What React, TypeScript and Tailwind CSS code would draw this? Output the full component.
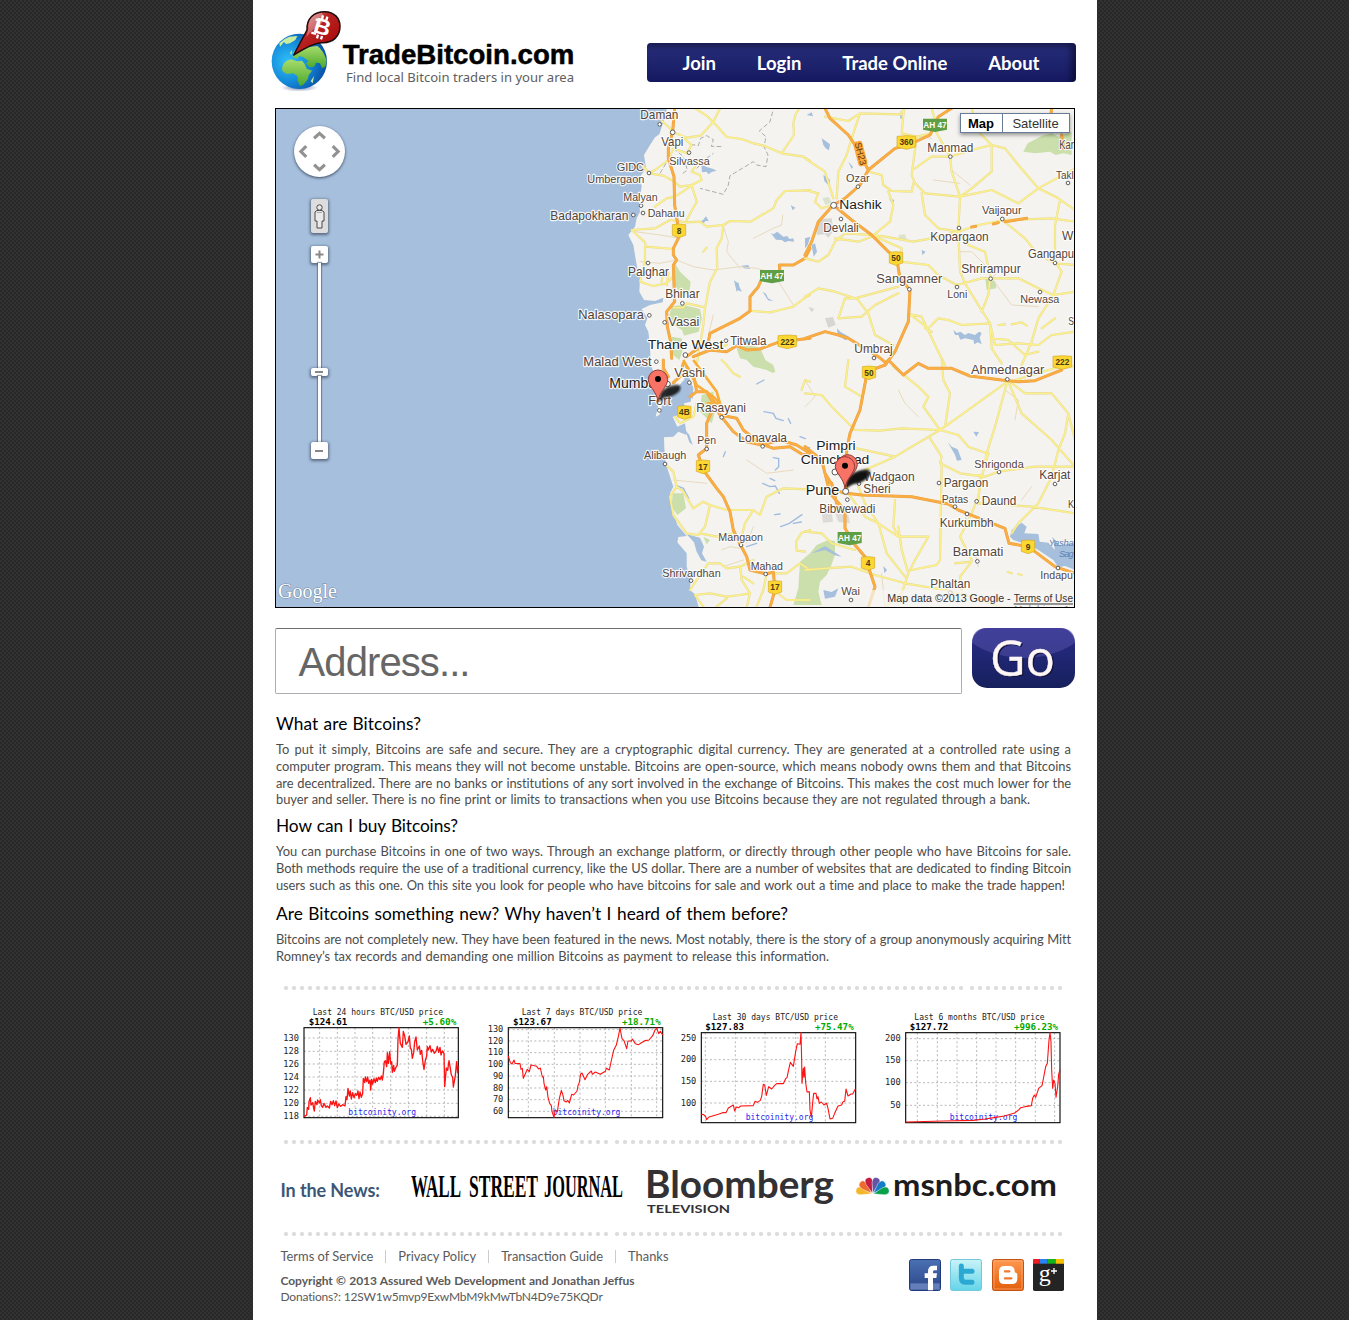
import React from "react";

type Label = [string, number, number, number, number];

/* text, x, baseline, width, font size */
const labelsNW: Label[] = [
  ["Daman", 301, 41, 114, 36], ["Vapi", 364, 122, 66, 36], ["Silvassa", 388, 180, 121, 34],
  ["GIDC", 230, 197, 82, 34], ["Umbergaon", 142, 233, 171, 34], ["Malyan", 250, 289, 103, 34],
  ["Badapokharan", 31, 345, 234, 36], ["Dahanu", 323, 335, 111, 34], ["Palghar", 264, 512, 123, 36],
  ["Bhinar", 376, 578, 103, 36], ["Nalasopara", 115, 642, 197, 38], ["Vasai", 385, 663, 93, 38],
  ["Titwala", 571, 720, 108, 36],
];
const bigNW: Label[] = [["Thane West", 323, 732, 227, 41]];
const labelsNE: Label[] = [
  ["Manmad", 367, 140, 138, 36], ["Ozar", 123, 232, 71, 34], ["Devlali", 55, 382, 106, 36],
  ["Vaijapur", 531, 328, 119, 34], ["Kopargaon", 376, 407, 175, 36], ["Shrirampur", 469, 503, 178, 36],
  ["Sangamner", 214, 535, 198, 39], ["Loni", 427, 580, 60, 34], ["Newasa", 646, 594, 117, 34],
  ["Umbraj", 148, 743, 115, 36], ["Gangapu", 669, 458, 138, 36], ["Kar", 763, 132, 44, 36],
  ["Takl", 753, 221, 53, 35], ["W", 771, 404, 34, 37], ["S", 790, 661, 17, 32],
];
const bigNE: Label[] = [["Nashik", 103, 313, 127, 41]];
const labelsSW: Label[] = [
  ["Malad West", 130, 18, 205, 37], ["Vashi", 403, 52, 92, 37], ["Fort", 325, 136, 68, 39],
  ["Rasayani", 469, 155, 149, 36], ["Lonavala", 595, 245, 146, 36], ["Pen", 472, 252, 56, 35],
  ["Alibaugh", 312, 298, 127, 34], ["Mangaon", 535, 542, 134, 35], ["Mahad", 632, 629, 97, 35],
  ["Shrivardhan", 367, 650, 175, 34],
];
const bigSW: Label[] = [["Mumbai", 208, 84, 150, 43]];
const labelsSE: Label[] = [
  ["Ahmednagar", 498, 43, 220, 39], ["Wadgaon", 176, 362, 153, 37], ["Sheri", 175, 400, 82, 36],
  ["Bibwewadi", 43, 458, 168, 36], ["Shrigonda", 508, 323, 148, 34], ["Pargaon", 416, 380, 134, 37],
  ["Karjat", 703, 357, 93, 36], ["Patas", 410, 428, 80, 34], ["Daund", 530, 435, 104, 37],
  ["Kurkumbh", 404, 500, 162, 36], ["Baramati", 443, 587, 152, 39], ["Phaltan", 376, 683, 120, 36],
  ["Indapu", 706, 658, 98, 34], ["Wai", 109, 706, 56, 34], ["K", 789, 443, 18, 32],
];
const bigSE: Label[] = [["Pimpri", 34, 269, 118, 41], ["Chinchwad", -13, 312, 206, 40], ["Pune", 2, 404, 101, 43]];

function Labels({ items, dark = false }: { items: Label[]; dark?: boolean }) {
  return (
    <g fill={dark ? "#1c1c1c" : "#54463d"} stroke="#ffffff" strokeOpacity={0.85} strokeWidth={7} strokeLinejoin="round" style={{ paintOrder: "stroke" }} fontFamily="Liberation Sans, sans-serif">
      {items.map(([t, x, y, w, s]) => (
        <text key={t} x={x} y={y} fontSize={s} textLength={w} lengthAdjust="spacingAndGlyphs">{t}</text>
      ))}
    </g>
  );
}

function Dots({ at, r = 5.5 }: { at: number[][]; r?: number }) {
  return (
    <g fill="#fff" stroke="#5b5b5b" strokeWidth={3}>
      {at.map(([x, y]) => <circle key={x + "-" + y} cx={x} cy={y} r={r} />)}
    </g>
  );
}

function Shield({ x, y, t, w = 40 }: { x: number; y: number; t: string; w?: number }) {
  const h = w / 2;
  return (
    <g transform={`translate(${x} ${y})`}>
      <path d={`M${-h} -18Q0 -22 ${h} -18V14L0 21L${-h} 14Z`} fill="#fcd733" stroke="#d3a91f" strokeWidth={2} />
      <text y={9} textAnchor="middle" fontFamily="Liberation Sans, sans-serif" fontWeight={700} fontSize={25} fill="#4a3c12">{t}</text>
    </g>
  );
}

function GreenShield({ x, y }: { x: number; y: number }) {
  return (
    <g transform={`translate(${x} ${y})`}>
      <path d="M-36 -19H36V14L0 21L-36 14Z" fill="#5f9e45" />
      <text y={9} textAnchor="middle" textLength={70} lengthAdjust="spacingAndGlyphs" fontFamily="Liberation Sans, sans-serif" fontWeight={700} fontSize={25} fill="#fff">AH 47</text>
    </g>
  );
}

function Roads({ yellow, orange, thin = "" }: { yellow: string; orange: string; thin?: string }) {
  return (
    <g fill="none" strokeLinejoin="round" strokeLinecap="round">
      <path d={thin} stroke="#e9d9bd" strokeWidth={3} />
      <path d={yellow} stroke="#e5d88f" strokeWidth={6.5} />
      <path d={yellow} stroke="#fcf08b" strokeWidth={4.2} />
      <path d={orange} stroke="#e5a045" strokeWidth={9} />
      <path d={orange} stroke="#fbad42" strokeWidth={6.5} />
    </g>
  );
}

function Pin({ x, y }: { x: number; y: number }) {
  return (
    <g transform={`translate(${x} ${y})`}>
      <path d="M0 0L8 -28Q24 -50 60 -52Q74 -46 62 -30Q44 -14 22 -14Z" fill="#111" opacity={0.88} filter="url(#soft)" />
      <path d="M0 0C-3 -32 -28 -44 -29 -67A29 29 0 0 1 29 -67C28 -44 3 -32 0 0Z" fill="#f87366" stroke="#8e3a33" strokeWidth={3} />
      <circle cy={-69} r={9} fill="#000" />
    </g>
  );
}

const NW = "translate(540 105) scale(.33333)";
const NE = "translate(805 105) scale(.33333)";
const SW = "translate(540 360) scale(.33333)";
const SE = "translate(805 360) scale(.33333)";

function MapCanvas() {
  return (
    <svg className="block h-full w-full" viewBox="276 109 798 498">
      <defs><filter id="soft" x="-30%" y="-30%" width="160%" height="160%"><feGaussianBlur stdDeviation="3" /></filter></defs>
      <rect x={276} y={109} width={798} height={498} fill="#a5bfdd" />
      <g transform={NW}>
        <path fill="#f4f3f0" d="M383 0L375 35L358 88L345 97L330 120L312 150L318 190L300 215L305 245L297 290L300 320L290 340L285 365L265 390L280 420L290 480L300 520L298 560L312 585L345 588L370 578L368 592L330 600L305 612L322 640L315 660L325 680L330 720L332 780L345 810L350 850L345 880L355 900L347 935L358 930L370 890L385 855L410 850L432 825L440 830L455 870L452 890L432 895L440 925L398 935L412 965L435 955L440 990L415 980L400 995L372 997L373 1030L377 1075L400 1145L390 1165L400 1225L412 1260L440 1293L415 1296L412 1312L440 1345L440 1385L452 1420L450 1455L465 1468L480 1520H1620V0Z" />
        <path fill="#a5bfdd" d="M440 1288L480 1298L492 1325L486 1345L500 1370L484 1366L470 1340L462 1312ZM432 820L446 812L460 850L458 882L446 870ZM436 975L448 990L458 1020L448 1012ZM484 178L500 186L520 192L530 198L516 200L505 208L500 200L486 202ZM692 384L700 388L712 380L730 395L742 393L748 402L760 400L762 410L745 408L735 412L725 405L708 404ZM582 526L590 532L596 534L598 545L606 560L594 556L590 560ZM668 560L678 566L684 580L700 588L684 586ZM480 350L490 344L498 334L506 348L496 348L490 356ZM626 765L640 758L650 752L664 764L684 772L670 775L650 778ZM604 482L625 480L630 492L612 490ZM752 300L766 308L758 316Z" />
        <g fill="#cbdfac">
          <path d="M405 475L420 500L452 530L448 565L425 572L405 540ZM395 604L430 600L480 612L486 640L476 680L432 692L426 675L400 660L388 630ZM590 730L625 720L660 728L676 765L700 780L706 800L698 804L680 795L640 785L620 765L600 760Z" />
          <path d="M395 695L425 700L430 730L418 765L396 748ZM485 870L520 860L525 920L515 955L480 920ZM398 1165L430 1165L438 1210L412 1230L395 1205ZM490 1295L510 1305L500 1318ZM780 1370L810 1345L830 1320L865 1305L885 1308V1350L872 1385L860 1410L840 1430L835 1460L845 1500H760L775 1450Z" />
        </g>
        <path d="M698 20L690 50L658 78L678 95L672 125L684 150L678 185L650 180L640 170L570 212L565 240L550 268L480 250M452 118L475 122L482 100L500 92L520 104L514 124L550 125M470 190L500 160L520 145M400 130L430 155L442 195L425 208M360 205L375 180L382 165" fill="none" stroke="#9e9e9e" strokeWidth={2.5} strokeDasharray="14 7" />
      </g>
      <g transform={NE} fill="#a5bfdd">
        <path d="M50 100L62 108L75 118L72 136L62 130L55 120ZM5 30L20 22L24 34ZM55 210L66 216L75 225L72 242L58 228ZM130 170L144 186L140 192ZM0 400L16 395L8 420L0 430ZM445 675L456 684L466 680L480 690L490 684L510 690L522 680L530 684L524 698L530 718L518 712L508 718L505 705L480 700L466 704L460 690L450 690ZM96 670L106 680L132 695L122 706L98 690ZM350 435L362 440L352 450ZM20 420L30 415L36 440L26 455ZM252 280L268 285L262 298ZM285 15L292 40L286 42Z" />
        <path d="M655 140L668 115L712 92L740 85L760 95L800 80V150L775 145L752 150L735 140L690 145L655 140M540 515L572 530L574 550L545 555Z" fill="#cbdfac" />
        <path d="M36 350L50 342L80 340L82 355L90 370L70 398L60 388L35 390ZM60 640L84 636L92 660L70 668ZM10 605L28 612L20 622Z" fill="#d8d6d3" />
        <path d="M280 390L300 388L304 402L284 404ZM52 280L70 275L80 292L62 300Z" fill="#dbe3cd" />
      </g>
      <g transform={SE} fill="#a5bfdd">
        <path d="M620 510L650 488L665 500L658 520L700 522L704 545L730 548L750 570L742 530L752 542L760 555L810 550V630L780 618L760 622L745 600L700 570L660 548L640 545L625 540L615 530ZM428 246L440 260L458 268L470 300L456 302L450 284ZM505 215L522 216L514 230ZM20 580L60 558L110 590L90 586L60 570ZM55 690L80 696L100 685L90 710L60 716ZM0 258L16 262L12 275ZM480 470L488 480L482 484ZM235 618L246 630L238 640Z" />
        <path d="M90 460L130 465L135 490L100 486ZM50 460L80 455L84 485L54 488Z" fill="#dddbd8" />
      </g>
      <g transform={SW} fill="none" stroke="#9fbce0" strokeWidth={4} strokeLinecap="round">
        <path d="M668 370L690 380L706 378L718 400M700 293L716 296L716 320L706 330M722 500L748 490L786 464M704 464L720 462M745 176L752 190M672 155L700 160L708 175L730 182M672 60L650 72M620 560L650 550M406 375L430 385L446 415M760 490L784 486M780 230L796 236M690 355L704 362M556 275L550 290" />
      </g>

      <g transform={NW}>
        <Roads
          thin="M285 380L360 390L420 400M300 470L360 475L410 465L460 485L520 495M550 365L565 410L560 440L600 490M640 400L700 370L725 360L728 330M520 495L600 485L650 490L700 505L760 600M520 630L505 690"
          yellow="M365 48L385 65L400 82L440 98L482 92L520 50L540 10M465 10L500 32L530 62L560 96L605 102L640 115L672 122L725 145L790 155L810 168M778 10L766 30L760 55L762 90L725 145M326 205L345 195L385 165L400 130L440 145L455 120L420 90M326 205L370 212L400 228L420 245L455 240L485 225L480 210L455 200L465 185M345 305L380 280L405 275L455 242L470 290L440 345M275 375L345 370L390 345L440 352L480 350L500 365L550 360L570 348L632 350L700 310L710 285L735 258L810 256M275 375L315 412L318 425L400 432M315 425L315 470L300 530L340 543L380 535L398 515M550 360L545 400L530 430L532 490L510 530L495 610L490 660L480 720L470 780M400 608L430 608L440 595L495 607M305 180L320 195L326 205M370 500L365 530M385 505L380 540M635 618L690 622L720 615L760 605L800 575L810 570M495 730L520 738L560 720M490 440L500 428"
          orange="M404 10L398 80L385 130L385 160L402 215L404 300L412 350L415 400L400 430L400 450L410 465L400 480L404 590L380 620L382 665L392 710L395 760M810 430L795 460L760 480L718 480L720 505L670 510L655 545L630 575L630 618L600 640L550 665L510 685L505 710L460 740L440 755M460 755L510 735L560 740L590 722L620 735L660 732L720 710L810 700"
        />
      </g>
      <g transform={NE}>
        <Roads
          thin="M300 90L380 100M385 225L465 235M440 195L495 240M465 440L500 440L540 480M600 480L560 520L620 600L700 605"
          yellow="M60 35L130 48L165 25L285 28L300 10M165 25L140 100L125 150L100 200L95 280M380 10L390 45L380 85L335 95L290 85L296 20M335 95L320 210L330 235L360 265L465 275L560 255L640 295L700 250L810 190M560 120L600 130L640 180L700 250L760 280L810 315M435 155L440 200L465 275L460 380L465 500L480 535L520 600L555 655M330 190L380 155L435 155L500 135L560 120L520 80L500 10M560 120L560 200L500 250L465 275M435 155L390 75M120 385L200 390L240 395L325 410L380 400L460 380L520 360L600 345L740 340L810 350M592 345L660 400L700 450L750 475L810 480M190 200L230 210L235 240L260 258L320 260L325 235M0 160L60 200L85 280M85 300L50 310L30 290L40 265L0 255M250 260L265 300L255 350L200 395L160 410L90 400M200 390L290 430L285 470L370 480L400 510L455 540L530 520L640 520L700 550L745 570L810 560M350 265L360 330L400 370L460 380M280 545L150 580L90 560L40 550L0 575M315 628L350 635L400 740L420 780M315 628L370 670L400 640L430 645L470 660L555 655M555 655L570 720L640 715L700 720L740 690L810 680M555 655L560 730L590 775M745 570L700 640L680 710L650 780M765 285L750 360L750 470L770 500L745 570M555 520L550 570L530 620M620 658L650 652L665 662M120 385L90 410L70 450L40 470L0 460M155 580L190 625L210 690L265 720M155 580L120 580L100 640L170 635L210 600L280 565M560 700L610 705L660 750L700 740M460 380L490 420L540 440L557 520M360 670L380 680M580 660L600 658M710 670L750 640"
          orange="M60 10L75 40L130 90L150 120L190 195M440 10L400 35L375 90L310 120L270 130L190 195L165 240L120 280L85 300L40 350L20 410L0 450M85 300L140 345L200 390L250 440L275 460L285 520L315 555L310 650L270 740L240 780M0 700L60 680L100 690L130 700L220 755L245 775M600 350L665 340M565 357L580 353M500 366L512 364M740 10L738 25M770 90L775 130" />
      </g>
      <g transform={SW}>
        <Roads
          thin="M500 370L400 360M545 570L570 560L600 565M620 550L640 500M620 300L680 340L760 330M550 620L610 600"
          yellow="M375 312L400 335L410 380L430 395L460 445L490 425L510 435L560 450L640 450L660 465L680 410L730 385L810 388M410 380L390 410L400 465L440 520L475 525L495 500L510 435M480 520L530 530L580 520M505 610L480 645L450 690M505 610L540 610L560 625L600 620L640 600M600 620L605 660L630 700L600 705L560 710L510 700L465 705L490 740M630 700L620 742M680 640L670 690L650 740M700 690L740 720L810 720M680 640L740 640L780 610L810 630M640 450L615 490L600 550M795 575L770 572L768 545L785 518L810 510M405 170L420 190L460 170L470 130M600 50L580 40L560 15L545 0M785 90L795 60L810 65M530 740L560 715M640 670L610 650"
          orange="M370 0L370 25L385 50M400 68L420 50L430 10M440 20L462 50L470 95L450 110M470 95L500 95L540 165L580 215L620 245L665 255L720 240L770 255L810 280M500 95L525 130L500 190L500 265L475 285L490 330L530 385L550 410L570 455L580 510L600 552L620 590L630 630L680 642L700 635L705 690L690 742M540 165L590 175L610 210L660 250L700 265L750 260L790 285L810 280" />
        <path d="M430 0L470 75L520 110L540 130L530 95L460 0M500 130L540 130" fill="none" stroke="#f9ae39" strokeWidth={8} />
      </g>
      <g transform={SE}>
        <Roads
          thin="M0 60L30 110L0 140M600 90L640 120L630 180M510 580L520 620M230 640L240 742M650 420L680 380M280 90L300 130L340 170"
          yellow="M0 100L50 105L80 140L150 210L225 212L290 205L400 210L420 200L600 70L780 15L810 20M130 0L120 80L170 110M265 20L340 80L370 110L355 140L405 210L270 290L180 330M410 0L415 60L435 100L420 200M608 60L570 200L545 280L520 410L500 460L465 530L500 600M608 60L650 160L740 240L810 320M608 60L660 100L740 100L790 160L780 220L760 270L740 350L700 430L640 490L620 520M405 210L460 225L490 260L545 280M375 235L410 290L405 310L465 340L540 350L580 335L690 320L810 320M410 310L405 600L395 615L320 630M155 265L270 290M490 345L525 345L520 430L560 432L680 440L810 460M130 400L180 470L220 490L280 530L370 530L330 600L310 640L300 670L210 645L140 620L60 625L0 630M280 500L290 570L310 640L290 700L240 742M270 420L265 500L280 530M220 490L245 580L300 650M0 515L50 520L80 550L150 570M300 670L420 690L500 710L590 742M450 610L500 605L465 650L470 690M608 636L620 640M640 642L650 645M160 380L180 430L220 490M790 160L810 240M550 280L530 350"
          orange="M250 0L240 15L200 30L185 45L165 150L135 220L125 270L125 400L170 405L320 410L430 432L460 450L510 470L600 505L612 550L670 560L750 620L810 640M250 0L295 45L340 10L370 25L440 25L495 48L590 60L640 65L690 62L720 50L770 30M0 260L50 300L60 340L90 390L120 400M80 370L95 430L120 460L120 505L150 555L180 590L190 620L210 680L190 742M60 340L75 400L110 440" />
      </g>

      <g transform={NW}>
        <Dots at={[[359, 58], [447, 143], [327, 204], [303, 302], [280, 330], [309, 324], [324, 474], [427, 595], [328, 631], [374, 652], [558, 707], [349, 770]]} />
        <Dots at={[[398, 82], [436, 750]]} r={7} />
        <Shield x={417} y={377} t="8" /><Shield x={742} y={710} t="222" w={56} /><GreenShield x={696} y={514} />
        <Labels items={labelsNW} /><Labels items={bigNW} dark />
      </g>
      <g transform={NE}>
        <Dots at={[[436, 155], [159, 245], [108, 342], [592, 342], [462, 369], [313, 553], [456, 546], [557, 521], [705, 561], [207, 759], [750, 474], [789, 234]]} />
        <Dots at={[[86, 301]]} r={9} />
        <g transform="translate(166 146) rotate(75)">
          <rect x={-38} y={-14} width={76} height={28} rx={9} fill="#fba73b" />
          <text y={9} textAnchor="middle" fontSize={28} textLength={70} lengthAdjust="spacingAndGlyphs" fontFamily="Liberation Sans, sans-serif" fill="#603d12">SH23</text>
        </g>
        <Shield x={304} y={112} t="360" w={56} /><Shield x={273} y={460} t="50" /><Shield x={772} y={772} t="222" w={56} /><GreenShield x={390} y={60} />
        <Labels items={labelsNE} /><Labels items={bigNE} dark />
      </g>
      <g transform={SW}>
        <Dots at={[[448, 68], [358, 151], [545, 172], [668, 259], [500, 267], [375, 312], [603, 555], [677, 642], [453, 662]]} />
        <Dots at={[[383, 72]]} r={8} />
        <Shield x={433} y={157} t="4B" /><Shield x={489} y={320} t="17" /><Shield x={705} y={682} t="17" />
        <Labels items={labelsSW} /><Labels items={bigSW} dark />
        <Pin x={354} y={126} />
      </g>
      <g transform={SE}>
        <Dots at={[[607, 58], [162, 371], [127, 419], [582, 336], [402, 369], [750, 372], [450, 440], [515, 424], [486, 462], [517, 604], [759, 624], [436, 698], [138, 720]]} />
        <Dots at={[[90, 336], [122, 394]]} r={9} />
        <Shield x={192} y={38} t="50" /><Shield x={189} y={610} t="4" /><Shield x={669} y={560} t="9" /><GreenShield x={134} y={535} />
        <Labels items={labelsSE} /><Labels items={bigSE} dark />
        <g fontFamily="Liberation Sans, sans-serif" fontStyle="italic" fontSize={28} fill="#5f83b4">
          <text x={731} y={558} textLength={75}>Yasha</text><text x={762} y={592} textLength={44}>Sag</text>
        </g>
        <Pin x={128} y={380} /><Pin x={120} y={386} />
        <rect x={185} y={690} width={625} height={52} fill="#f6f5f3" opacity={0.72} />
        <g fontFamily="Liberation Sans, sans-serif" fill="#333" fontSize={31}>
          <text x={247} y={727} textLength={370} lengthAdjust="spacingAndGlyphs">Map data ©2013 Google -</text>
          <text x={626} y={727} textLength={178} lengthAdjust="spacingAndGlyphs">Terms of Use</text>
        </g>
        <path d="M626 732H804" stroke="#333" strokeWidth={3} />
        <text x={628} y={757} fontSize={29} textLength={165} fill="#888" fontFamily="Liberation Sans, sans-serif">Malshiras 1</text>
      </g>
      <text x={278} y={598} fontFamily="Liberation Serif, serif" fontSize={21} textLength={59} lengthAdjust="spacingAndGlyphs" fill="#fff" stroke="#7b8ba2" strokeWidth={1.1} style={{ paintOrder: "stroke" }}>Google</text>
    </svg>
  );
}

function MapControls() {
  const btn = "flex h-[17px] w-[17px] items-center justify-center rounded-[2px] bg-white shadow-[0_1px_3px_1px_rgba(40,50,70,0.6)]";
  return (
    <div className="absolute left-[17.500px] top-[17px] flex w-[52px] flex-col items-center">
      <svg className="h-[51px] w-[51px] rounded-full bg-white shadow-[0_1px_3px_rgba(30,40,60,0.8)]" viewBox="0 0 52 52" fill="none" stroke="#929292" strokeWidth={3.2}>
        <path d="M20.500 12.500L26 7.500L31.500 12.500M20.500 39.500L26 44.500L31.500 39.500M12.500 20.500L7 26L12.500 31.500M39.500 20.500L45 26L39.500 31.500" />
      </svg>
      <div className="mt-[22px] flex h-[34px] w-[17px] items-center justify-center rounded-[2px] bg-[#dddddd] shadow-[0_1px_3px_1px_rgba(40,50,70,0.6)]">
        <svg width="11" height="25" viewBox="0 0 11 25" fill="#e9e9e9" stroke="#4b4b4b">
          <path d="M3 6.500L1 8V17H3V24H8V17H10V8L8 6.500Z" /><circle cx="5.500" cy="3.500" r="2.700" />
          <path d="M3 8.500H8" stroke="#aaa" />
        </svg>
      </div>
      <div className={btn + " mt-[13px]"}>
        <svg width="9" height="9" viewBox="0 0 9 9" stroke="#888" strokeWidth="2"><path d="M0.500 4.500H8.500M4.500 0.500V8.500" /></svg>
      </div>
      <div className="h-[105px] w-[3px] bg-white shadow-[0_0_1px_1px_rgba(80,95,120,0.6)]" />
      <div className="flex h-[8px] w-[17px] items-center justify-center rounded-[2px] bg-white shadow-[0_1px_3px_1px_rgba(40,50,70,0.6)]"><span className="h-[2px] w-2 bg-[#888]" /></div>
      <div className="h-[66px] w-[3px] bg-white shadow-[0_0_1px_1px_rgba(80,95,120,0.6)]" />
      <div className={btn}><span className="h-[2px] w-2 bg-[#888]" /></div>
    </div>
  );
}

function Logo() {
  return (
    <svg className="h-[90px] w-[312px]" viewBox="84 15 936 270">
      <defs>
        <radialGradient id="sea" cx="30%" cy="50%" r="75%"><stop offset="0" stopColor="#2fc0fa" /><stop offset=".5" stopColor="#1489d8" /><stop offset="1" stopColor="#07469c" /></radialGradient>
        <linearGradient id="land" x1="0" y1="0" x2="0" y2="1"><stop offset="0" stopColor="#a9dc6c" /><stop offset="1" stopColor="#4aa82c" /></linearGradient>
        <linearGradient id="red" x1="0" y1="0" x2="1" y2="1"><stop offset="0" stopColor="#e8b0b0" /><stop offset=".4" stopColor="#b92424" /><stop offset="1" stopColor="#a50000" /></linearGradient>
        <radialGradient id="shade"><stop offset="0" stopColor="#51649b" stopOpacity=".8" /><stop offset="1" stopColor="#51649b" stopOpacity="0" /></radialGradient>
      </defs>
      <ellipse cx="178" cy="263" rx="56" ry="12" fill="url(#shade)" />
      <circle cx="178" cy="184" r="83" fill="url(#sea)" />
      <g fill="url(#land)">
        <path d="M126 206Q128 184 153 178L172 184L186 182L194 192L200 206L216 212L206 226L203 238L190 254L180 258L174 244L172 228L160 220L140 222L128 214Z" />
        <path d="M158 172L160 156L180 144L232 138Q250 150 260 182L256 200L246 204L240 190L228 188L222 200L208 202L198 190L206 184L190 172L178 168L172 176Z" />
        <path d="M118 130Q130 116 148 110L172 108L166 120L150 130L138 132L132 126L120 140ZM212 244L222 228L218 250ZM150 158L156 150L154 166Z" fill="#c8eda0" />
      </g>
      <path d="M161 165L201 90C199 55 222 35 254 35C284 35 300 56 300 79C300 110 278 128 250 128Q222 126 161 165Z" fill="url(#red)" stroke="#1e0b0b" strokeWidth="4.500" strokeLinejoin="round" />
      <path d="M205 86C203 57 223 40 246 39Q262 60 234 79Q215 90 199 112Z" fill="#fff" opacity=".32" />
      <text x="222" y="104" transform="rotate(17 248 82)" fontFamily="Liberation Sans, sans-serif" fontWeight="700" fontSize="66" fill="#fff" textLength="50" lengthAdjust="spacingAndGlyphs">B</text>
      <path d="M246 57L249 46M259 61L262 50M231 115L234 104M243 118L246 108M227 58L240 62M214 98L228 102" stroke="#fff" strokeWidth="7" />
      <text x="308" y="191" fontFamily="Liberation Sans, sans-serif" fontWeight="700" fontSize="84" textLength="695" lengthAdjust="spacingAndGlyphs" stroke="#000" strokeWidth="1.500" strokeLinejoin="round">TradeBitcoin.com</text>
      <text x="318" y="247" fontFamily="Noto Sans, sans-serif" fontSize="40" fill="#5e5e5e" textLength="684" lengthAdjust="spacingAndGlyphs">Find local Bitcoin traders in your area</text>
    </svg>
  );
}

function Dotted() {
  const d = "h-2 bg-[radial-gradient(circle,#dddddd_1.8px,transparent_2.4px)] bg-[length:8px_8px]";
  return (
    <div className="flex gap-[3px] pl-[7px]">
      <div className={d + " w-[328px]"} /><div className={d + " w-[352px]"} /><div className={d + " w-[96px]"} />
    </div>
  );
}

type ChartData = {
  view: string; title: string; tx: number; tw: number; ty: number; price: string; px: number; change: string; cw: number;
  box: [number, number, number, number]; ticks: [string, number][]; cols: number[]; line: string; site: number; sw?: number;
};

const charts: ChartData[] = [
  {
    view: "15 0 600 390", title: "Last 24 hours BTC/USD price", tx: 128, tw: 391, ty: 45, price: "$124.61", px: 116, change: "+5.60%", cw: 101,
    box: [102, 83, 463, 270], site: 235, sw: 4,
    ticks: [["130", 114], ["128", 154], ["126", 192], ["124", 231], ["122", 270], ["120", 310], ["118", 349]],
    cols: [149, 202, 255, 308, 362, 415, 470, 523],
    line: "M102 350L110 345L112 322L116 328L117 305L121 293L123 315L128 308L131 325L133 333L136 304L141 314L143 300L148 309L151 299L154 317L158 322L162 310L168 322L172 318L178 324L182 304L186 314L190 302L194 317L198 303L202 323L206 312L212 319L218 314L225 318L228 290L231 299L234 265L238 288L241 273L244 297L248 278L252 293L256 281L260 286L264 273L267 296L270 276L274 292L278 280L280 235L284 248L286 231L290 245L293 231L296 250L300 240L302 270L305 238L308 252L312 236L316 248L319 234L322 244L326 232L330 239L334 228L337 240L340 220L343 185L346 182L350 200L352 158L355 190L359 155L362 192L365 185L367 217L371 196L373 214L378 202L382 195L384 117L387 83L389 110L391 130L397 142L400 94L404 108L408 133L414 125L418 108L421 145L424 148L427 175L431 158L434 125L438 111L442 150L448 138L451 163L455 151L458 182L462 208L466 181L470 168L472 140L475 150L480 137L484 156L488 148L493 160L498 154L502 139L506 157L510 142L513 165L517 153L522 160L524 260L529 204L533 211L537 182L541 205L544 225L548 231L550 261L556 227L560 185L563 218L564 197",
  },
  {
    view: "615 0 600 390", title: "Last 7 days BTC/USD price", tx: 755, tw: 362, ty: 45, price: "$123.67", px: 729, change: "+18.71%", cw: 116,
    box: [715, 83, 463, 270], site: 848,
    ticks: [["130", 89], ["120", 123], ["110", 158], ["100", 193], ["90", 228], ["80", 264], ["70", 299], ["60", 334]],
    cols: [775, 853, 930, 1006, 1084, 1160],
    line: "M715 168L721 188L726 192L732 180L735 190L750 191L753 208L757 205L760 235L766 221L772 208L778 215L783 195L800 199L806 207L811 204L817 231L820 230L822 250L827 270L830 260L834 292L839 310L844 317L846 335L852 352L856 330L862 335L868 296L874 271L879 286L882 302L889 306L893 301L898 309L905 283L911 285L921 273L924 257L928 247L932 222L936 219L945 239L953 223L964 213L967 223L976 216L991 223L1006 214L1009 205L1018 210L1023 186L1031 151L1039 135L1045 110L1050 84L1056 116L1062 122L1070 146L1074 123L1084 123L1087 117L1096 131L1106 134L1113 129L1125 122L1137 120L1148 107L1155 90L1160 84L1166 101L1171 94L1178 105",
  },
  {
    view: "15 0 600 390", title: "Last 30 days BTC/USD price", tx: 128, tw: 376, ty: 59, price: "$127.83", px: 106, change: "+75.47%", cw: 116,
    box: [94, 98, 463, 270], site: 227,
    ticks: [["250", 114], ["200", 179], ["150", 244], ["100", 309]], cols: [106, 196, 285, 377, 466],
    line: "M94 343L101 344L107 350L110 359L117 351L130 347L145 343L158 338L168 338L175 324L190 315L194 333L199 321L206 323L212 318L250 317L255 304L262 307L271 301L275 289L280 253L284 255L289 286L296 260L305 267L314 256L320 251L340 251L347 236L351 233L356 209L361 187L370 199L377 155L382 131L390 133L393 98L395 180L396 250L400 204L402 232L404 201L407 248L411 276L418 275L420 330L424 352L429 298L431 280L438 280L441 297L444 290L448 310L454 306L462 315L470 310L474 325L480 357L488 355L494 340L504 318L515 315L519 305L524 304L528 267L534 288L543 282L548 282L556 267",
  },
  {
    view: "615 0 600 390", title: "Last 6 months BTC/USD price", tx: 733, tw: 391, ty: 59, price: "$127.72", px: 719, change: "+996.23%", cw: 132,
    box: [707, 98, 463, 270], site: 839,
    ticks: [["200", 116], ["150", 182], ["100", 248], ["50", 316]], cols: [742, 802, 861, 920, 978, 1037, 1096, 1154],
    line: "M707 366L820 363L910 361L945 357L977 352L1003 348L1034 339L1048 328L1052 323L1065 320L1084 317L1088 295L1093 285L1097 292L1106 265L1116 257L1120 237L1127 200L1132 190L1137 120L1140 98L1143 125L1145 211L1148 265L1151 240L1155 250L1158 292L1163 260L1166 223L1170 208",
  },
];

function Chart(c: ChartData) {
  const [x, y, w, h] = c.box;
  const mono = "DejaVu Sans Mono, monospace";
  return (
    <svg viewBox={c.view} className="h-[130px] w-full" fontFamily={mono}>
      <text x={c.tx} y={c.ty} fontSize={27} textLength={c.tw} lengthAdjust="spacingAndGlyphs" fill="#222">{c.title}</text>
      <text x={c.px} y={y - 7} fontSize={25} fontWeight={700} textLength={116} lengthAdjust="spacingAndGlyphs">{c.price}</text>
      <text x={x + w - 6 - c.cw} y={y - 7} fontSize={25} fontWeight={700} textLength={c.cw} lengthAdjust="spacingAndGlyphs" fill="#00ab00">{c.change}</text>
      {c.ticks.map(([t, ty]) => (
        <g key={t}>
          <text x={x - 15} y={ty + 8} textAnchor="end" fontSize={26} fill="#222">{t}</text>
          <path d={`M${x} ${ty}h${w}`} stroke="#aaa" strokeWidth={2.5} strokeDasharray="6 7" />
        </g>
      ))}
      {c.cols.map((cx) => <path key={cx} d={`M${cx} ${y}v${h}`} stroke="#aaa" strokeWidth={2.5} strokeDasharray="6 7" />)}
      <rect x={x} y={y} width={w} height={h} fill="none" stroke="#111" strokeWidth={3.5} />
      <text x={c.site} y={y + 261} fontSize={27} textLength={203} lengthAdjust="spacingAndGlyphs" fill="#2828ee">bitcoinity.org</text>
      <path d={c.line} fill="none" stroke="#ff1212" strokeWidth={c.sw ?? 3.3} strokeLinejoin="round" />
    </svg>
  );
}

function NewsLogos() {
  return (
    <svg className="h-[60px] w-[664px]" viewBox="405 1160 664 60">
      <g fontFamily="Liberation Serif, serif" fontSize="32" fontWeight="700">
        <text x="411" y="1196.500" textLength="50" lengthAdjust="spacingAndGlyphs">WALL</text>
        <text x="469" y="1196.500" textLength="69" lengthAdjust="spacingAndGlyphs">STREET</text>
        <text x="544" y="1196.500" textLength="79" lengthAdjust="spacingAndGlyphs">JOURNAL</text>
      </g>
      <text x="645" y="1198" fontFamily="Lato, sans-serif" fontWeight="700" fontSize="38" fill="#333133" textLength="189" lengthAdjust="spacingAndGlyphs">Bloomberg</text>
      <text x="647" y="1213" fontFamily="Lato, sans-serif" fontWeight="700" fontSize="12" fill="#333133" textLength="83" lengthAdjust="spacingAndGlyphs">TELEVISION</text>
      <g transform="translate(872.500 1194)" stroke="#fff" strokeWidth=".4">
        {["#f3b72b", "#ec6a2d", "#c41c43", "#6553a4", "#147dc5", "#08a04b"].map((c, i) => (
          <path key={c} d="M0 0L-3.600 -10Q-4.600 -16 0 -16Q4.600 -16 3.600 -10Z" fill={c} transform={`rotate(${[-76, -46, -16, 16, 46, 76][i]}) translate(0 -1)`} />
        ))}
      </g>
      <text x="893" y="1196" fontFamily="Lato, sans-serif" fontWeight="700" fontSize="31" fill="#1d1b1c" textLength="164" lengthAdjust="spacingAndGlyphs">msnbc.com</text>
    </svg>
  );
}

function Social() {
  return (
    <div className="flex pt-[21px]">
      <svg className="mr-[9px] h-8 w-8" viewBox="0 0 96 96">
        <defs><linearGradient id="fb" x1="0" y1="0" x2="0" y2="1"><stop stopColor="#4a70b4" /><stop offset="1" stopColor="#2b4687" /></linearGradient></defs>
        <rect x="1.500" y="1.500" width="93" height="93" rx="6" fill="url(#fb)" stroke="#1f3a7b" strokeWidth="3" />
        <rect x="4" y="73" width="88" height="19" fill="#637eb9" />
        <path d="M57 94V57H47V43H57V37Q57 20 73 20H84V34H76Q72 34 72 39V43H84L82 57H72V94Z" fill="#fff" />
      </svg>
      <svg className="mr-[10px] h-8 w-8" viewBox="0 0 96 96">
        <defs><linearGradient id="tw" x1="0" y1="0" x2="0" y2="1"><stop stopColor="#c9f2f8" /><stop offset="1" stopColor="#63d5e8" /></linearGradient></defs>
        <rect x="1.500" y="1.500" width="93" height="93" rx="6" fill="url(#tw)" stroke="#74c8dc" strokeWidth="3" />
        <path d="M34 21V57Q34 70 47 70H66M34 37H66" fill="none" stroke="#2ba9d2" strokeWidth="15" strokeLinecap="round" />
      </svg>
      <svg className="mr-[9px] h-8 w-8" viewBox="0 0 96 96">
        <defs><linearGradient id="bl" x1="0" y1="0" x2="0" y2="1"><stop stopColor="#ff9850" /><stop offset="1" stopColor="#e15e0b" /></linearGradient></defs>
        <rect x="1.500" y="1.500" width="93" height="93" rx="6" fill="url(#bl)" stroke="#c55211" strokeWidth="3" />
        <rect x="6" y="6" width="84" height="84" rx="3" fill="none" stroke="#ffb27c" strokeWidth="2" />
        <path d="M38 21H52Q68 21 68 37Q68 42 73 42Q76 42 76 47V59Q76 75 60 75H37Q21 75 21 59V37Q21 21 38 21Z" fill="#fff" />
        <path d="M39 37H52M39 58H58" stroke="#ee7930" strokeWidth="7" strokeLinecap="round" />
      </svg>
      <svg className="h-8 w-[31px]" viewBox="0 0 93 96">
        <rect width="93" height="96" rx="5" fill="#242424" />
        <path d="M0 14V4Q0 0 4 0H20V14Z" fill="#ed1d24" /><path d="M20 0H44V14H20Z" fill="#2a83f3" /><path d="M44 0H68V14H44Z" fill="#14b41c" /><path d="M68 0H89Q93 0 93 4V14H68Z" fill="#f8c100" />
        <text x="17" y="67" fontFamily="Liberation Serif, serif" fontSize="72" fill="#fff">g</text>
        <path d="M54 36H72M63 27V45" stroke="#fff" strokeWidth="4" />
      </svg>
    </div>
  );
}

const articles = [
  {
    title: "What are Bitcoins?", w: "w-[145px] tracking-[0.05px]", gap: "pt-[18px]",
    lines: [
      ["To put it simply, Bitcoins are safe and secure. They are a cryptographic digital currency. They are generated at a controlled rate using a", "w-[795px] tracking-[0.02px]"],
      ["computer program. This means they will not become unstable. Bitcoins are open-source, which means nobody owns them and that Bitcoins", "w-[795px] tracking-[-0.02px]"],
      ["are decentralized. There are no banks or institutions of any sort involved in the exchange of Bitcoins. This makes the cost much lower for the", "w-[795px] tracking-[-0.07px]"],
      ["buyer and seller. There is no fine print or limits to transactions when you use Bitcoins because they are not regulated through a bank.", "w-[754px] tracking-[-0.07px]"],
    ],
  },
  {
    title: "How can I buy Bitcoins?", w: "w-[182px] tracking-[-0.1px]", gap: "pt-[6px]",
    lines: [
      ["You can purchase Bitcoins in one of two ways. Through an exchange platform, or directly through other people who have Bitcoins for sale.", "w-[795px] tracking-[0px]"],
      ["Both methods require the use of a traditional currency, like the US dollar. There are a number of websites that are dedicated to finding Bitcoin", "w-[795px] tracking-[-0.1px]"],
      ["users such as this one. On this site you look for people who have bitcoins for sale and work out a time and place to make the trade happen!", "w-[789px] tracking-[-0.1px]"],
    ],
  },
  {
    title: "Are Bitcoins something new? Why haven’t I heard of them before?", w: "w-[512px] tracking-[0.02px]", gap: "pt-[9px]",
    lines: [
      ["Bitcoins are not completely new. They have been featured in the news. Most notably, there is the story of a group anonymously acquiring Mitt", "w-[795px] tracking-[-0.12px]"],
      ["Romney’s tax records and demanding one million Bitcoins as payment to release this information.", "w-[553px] tracking-[0px]"],
    ],
  },
];

export default function App() {
  return (
    <div className="flex h-[1320px] justify-center overflow-hidden bg-[repeating-conic-gradient(#282828_0_25%,#323232_0_50%)] bg-[length:4px_4px] font-['Lato',sans-serif]">
      <div className="h-full w-[844px] shrink-0 bg-white pl-[22px] pr-[22px]">
        <header className="flex h-[108px] items-start">
          <div className="-ml-[7px] mt-[5px]"><Logo /></div>
          <nav className="ml-[67px] mt-[43px] flex h-[39px] w-[429px] shrink-0 items-center rounded bg-linear-to-b from-[#282e7b] to-[#151961] pl-9 pr-[36px] pt-px text-[18.500px] font-bold leading-none text-white shadow-[inset_-5px_3px_6px_rgba(0,0,20,0.5)]">
            <div className="flex w-full justify-between whitespace-nowrap"><a>Join</a><a>Login</a><a>Trade Online</a><a>About</a></div>
          </nav>
        </header>

        <section className="relative h-[500px] w-[800px] border border-black">
          <MapCanvas />
          <MapControls />
          <div className="absolute right-1 top-1 flex h-[20px] w-[110px] border border-[#687b97] bg-white font-['Liberation_Sans',sans-serif] text-[13px] leading-[19px] text-[#333] shadow-[0_2px_4px_rgba(0,0,0,0.4)]">
            <span className="w-[42px] border-r border-[#687b97] text-center font-bold text-black">Map</span>
            <span className="flex-1 text-center">Satellite</span>
          </div>
        </section>

        <form className="mt-5 flex gap-[10px]">
          <div className="flex h-[66px] w-[687px] items-center rounded-[2px] border border-[#abadb3] border-t-[#707070] pl-[23px] pt-px font-['Liberation_Sans',sans-serif] text-[40px] tracking-[-0.9px] text-[#666]">Address...</div>
          <svg className="h-[60px] w-[103px]" viewBox="0 0 103 60">
            <defs><linearGradient id="go" x1="0" y1="0" x2="0" y2="1"><stop stopColor="#2a2c8a" /><stop offset="1" stopColor="#16205c" /></linearGradient></defs>
            <rect width="103" height="60" rx="15" fill="url(#go)" />
            <path d="M15 0H88Q103 0 103 15Q80 30 51 30Q20 29 0 15Q0 0 15 0Z" fill="#5350a8" opacity=".55" />
            <text x="19.500" y="49" fontFamily="Open Sans, sans-serif" fontSize="49" textLength="65" lengthAdjust="spacingAndGlyphs" fill="#10123a">Go</text>
            <text x="18" y="47.500" fontFamily="Open Sans, sans-serif" fontSize="49" textLength="65" lengthAdjust="spacingAndGlyphs" fill="#fff6f6" stroke="#fff6f6" strokeWidth=".4">Go</text>
          </svg>
        </form>

        <main className="h-[290px] pl-[1.500px]">
          {articles.map((a) => (
            <article key={a.title} className={a.gap}>
              <h2 className={a.w + " mb-[5px] h-6 whitespace-nowrap text-[17.300px] leading-6 text-black [text-align-last:justify]"}>{a.title}</h2>
              {a.lines.map(([t, w]) => (
                <p key={t} className={w + " h-[16.750px] whitespace-nowrap text-[12.900px] leading-[16.750px] text-[#4c4c4c] [text-align-last:justify]"}>{t}</p>
              ))}
            </article>
          ))}
        </main>

        <Dotted />
        <div className="mt-[8px] grid h-[130px] grid-cols-4">{charts.map((c) => <Chart key={c.title} {...c} />)}</div>
        <div className="mt-[8px]"><Dotted /></div>
        <section className="flex h-[84px] items-center">
          <h3 className="w-[130px] shrink-0 whitespace-nowrap pl-1.5 pt-[5px] text-[18px] font-bold tracking-[-0.1px] text-[#3b5777]">In the News:</h3>
          <div className="shrink-0 pt-1"><NewsLogos /></div>
        </section>
        <Dotted />

        <footer className="flex justify-between pl-1.5 pr-[11px] text-[12.900px] text-[#5a5a5a]">
          <div>
            <div className="mt-2 flex h-5 w-[388px] items-center justify-between whitespace-nowrap leading-5">
              <a>Terms of Service</a><i className="h-[13px] w-px bg-[#ccc]" /><a>Privacy Policy</a><i className="h-[13px] w-px bg-[#ccc]" /><a>Transaction Guide</a><i className="h-[13px] w-px bg-[#ccc]" /><a>Thanks</a>
            </div>
            <div className="mt-[7px] w-[354px] whitespace-nowrap text-[12px] font-bold leading-4 tracking-[-0.05px] [text-align-last:justify]">Copyright © 2013 Assured Web Development and Jonathan Jeffus</div>
            <div className="w-[322px] whitespace-nowrap text-[12px] leading-4 tracking-[-0.2px] [text-align-last:justify]">Donations?: 12SW1w5mvp9ExwMbM9kMwTbN4D9e75KQDr</div>
          </div>
          <Social />
        </footer>
      </div>
    </div>
  );
}
